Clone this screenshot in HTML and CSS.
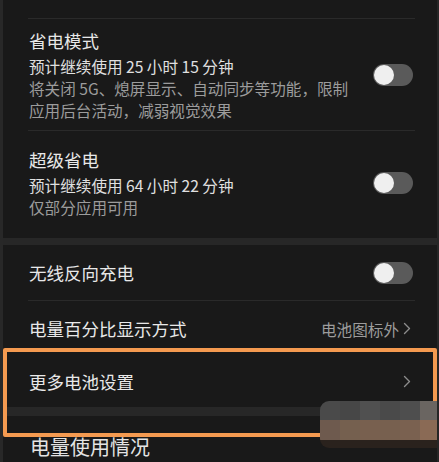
FILE: index.html
```html
<!DOCTYPE html>
<html lang="zh-CN">
<head>
<meta charset="utf-8">
<title>电池设置</title>
<link rel="stylesheet" href="styles.css">
</head>
<body>
<div class="page">
  <div class="top-gap"></div>
  <div class="divider"></div>

  <div class="item item-first">
    <div class="item-text">
      <div class="title">省电模式</div>
      <div class="sub">预计继续使用 25 小时 15 分钟</div>
      <div class="desc">将关闭 5G、熄屏显示、自动同步等功能，限制<br>应用后台活动，减弱视觉效果</div>
    </div>
    <div class="toggle"><span class="knob"></span></div>
  </div>
  <div class="divider"></div>

  <div class="item item-second">
    <div class="item-text">
      <div class="title">超级省电</div>
      <div class="sub">预计继续使用 64 小时 22 分钟</div>
      <div class="desc">仅部分应用可用</div>
    </div>
    <div class="toggle"><span class="knob"></span></div>
  </div>

  <div class="band"></div>

  <div class="row row-55">
    <div class="title">无线反向充电</div>
    <div class="toggle"><span class="knob"></span></div>
  </div>
  <div class="divider"></div>

  <div class="row row-55">
    <div class="title">电量百分比显示方式</div>
    <div class="value">电池图标外
      <svg class="chev" width="8" height="13" viewBox="0 0 8 13"><polyline points="1.5,1.5 6.5,6.5 1.5,11.5" fill="none" stroke="#8c8c8c" stroke-width="1.4" stroke-linecap="round" stroke-linejoin="round"/></svg>
    </div>
  </div>

  <div class="row row-51">
    <div class="title">更多电池设置</div>
    <div class="value">
      <svg class="chev" width="8" height="13" viewBox="0 0 8 13"><polyline points="1.5,1.5 6.5,6.5 1.5,11.5" fill="none" stroke="#8c8c8c" stroke-width="1.4" stroke-linecap="round" stroke-linejoin="round"/></svg>
    </div>
  </div>

  <div class="band band-tall"></div>

  <div class="header">电量使用情况</div>

  <div class="highlight"></div>

  <div class="mosaic">
    <span class="m t1"></span><span class="m t2"></span><span class="m t3"></span><span class="m t4"></span><span class="m t5"></span><span class="m t6"></span>
    <span class="m b1"></span><span class="m b2"></span><span class="m b3"></span><span class="m b4"></span><span class="m b5"></span><span class="m b6"></span>
    <span class="m-foot"></span>
  </div>
</div>
</body>
</html>
```

FILE: styles.css
```css
html, body {
  margin: 0;
  padding: 0;
  background: #191919;
}

.page {
  position: relative;
  width: 439px;
  height: 462px;
  box-sizing: border-box;
  overflow: hidden;
  background: #191919;
  border-left: 3px solid #282828;
  border-right: 2px solid #262626;
  font-family: "Noto Sans CJK SC", "Noto Sans", sans-serif;
  color: #e6e6e6;
}

.top-gap {
  height: 18px;
}

.divider {
  height: 1px;
  margin: 0 22px 0 25px;
  background: #2a2a2a;
}

.item {
  display: flex;
  align-items: center;
  justify-content: space-between;
  padding-left: 26px;
  padding-right: 24px;
}

.item-first {
  padding-top: 10px;
  padding-bottom: 9px;
}

.item-second {
  padding-top: 17px;
  padding-bottom: 20px;
}

.title {
  font-size: 17.5px;
  line-height: 24px;
  color: #e8e8e8;
}

.sub {
  margin-top: 2px;
  font-size: 15.6px;
  line-height: 22px;
  color: #e0e0e0;
}

.desc {
  font-size: 15.6px;
  line-height: 22px;
  color: #9c9c9c;
}

.toggle {
  position: relative;
  flex: none;
  width: 40px;
  height: 22px;
  border-radius: 11px;
  background: #5a5a5a;
}

.knob {
  position: absolute;
  left: 1px;
  top: 1px;
  width: 20px;
  height: 20px;
  border-radius: 50%;
  background: #efefef;
}

.band {
  height: 7px;
  background: #272727;
}

.band-tall {
  height: 9px;
}

.row {
  display: flex;
  align-items: center;
  justify-content: space-between;
  padding-left: 26px;
  padding-right: 24px;
}

.row-55 {
  height: 55px;
}

.row-51 {
  height: 51px;
}

.value {
  display: flex;
  align-items: center;
  gap: 4px;
  font-size: 15.6px;
  color: #9c9c9c;
  padding-right: 2px;
}

.chev {
  display: block;
}

.header {
  padding: 18px 0 0 27px;
  font-size: 20px;
  line-height: 26px;
  color: #e4e4e4;
}

.highlight {
  position: absolute;
  left: 0;
  top: 348px;
  width: 434px;
  height: 89px;
  box-sizing: border-box;
  border: 4px solid #f49a50;
  border-radius: 2px;
}

.mosaic {
  position: absolute;
  left: 317px;
  top: 401px;
  width: 119px;
  height: 47px;
  display: grid;
  grid-template-columns: 20px 20px 20px 20px 20px 19px;
  grid-template-rows: 19px 20px 8px;
  border-radius: 9px 0 0 9px;
  overflow: hidden;
}

.m-foot {
  grid-column: 1 / 7;
  background: #2a221d;
}

.t1 { background: #4a4a4a; }
.t2 { background: #474747; }
.t3 { background: #505050; }
.t4 { background: #4a4a4a; }
.t5 { background: #4e4e4e; }
.t6 { background: #6a6561; }
.b1 { background: #6e5a4e; }
.b2 { background: #75604f; }
.b3 { background: #78604f; }
.b4 { background: #77604f; }
.b5 { background: #7a6150; }
.b6 { background: #8a6a55; }
```
